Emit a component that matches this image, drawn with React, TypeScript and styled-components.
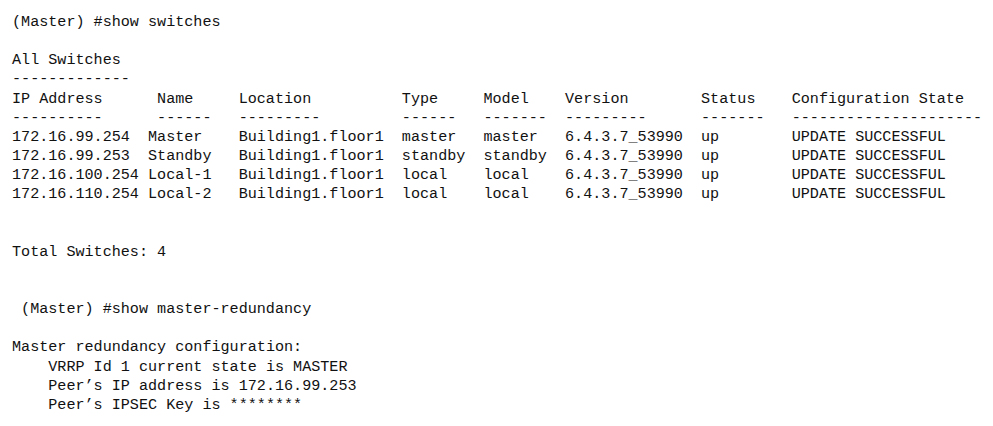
import React from "react";
import styled, { createGlobalStyle } from "styled-components";

const Global = createGlobalStyle`
  html, body { margin: 0; padding: 0; background: #ffffff; }
`;

const LH = 19.15;

const Console = styled.div`
  display: flex;
  flex-direction: column;
  padding: 13px 0 0 12px;
  font-family: "Liberation Mono", "Courier New", monospace;
  font-size: 15.12px;
  line-height: ${LH}px;
  color: #111111;
`;

const Line = styled.div<{ $indent?: number; $gapBefore?: number }>`
  white-space: pre;
  height: ${LH}px;
  padding-left: ${(p) => (p.$indent ?? 0)}ch;
  margin-top: ${(p) => (p.$gapBefore ?? 0) * LH}px;
`;

const Row = styled.div`
  display: flex;
  white-space: pre;
  height: ${LH}px;
`;

const Cell = styled.span<{ $w?: number }>`
  display: inline-block;
  flex: none;
  width: ${(p) => (p.$w ? `${p.$w}ch` : "auto")};
`;

const headWidths = [16, 9, 18, 9, 9, 15, 10];
const dataWidths = [15, 10, 18, 9, 9, 15, 10];

const headers = ["IP Address", "Name", "Location", "Type", "Model", "Version", "Status", "Configuration State"];
const dashes = [10, 6, 9, 6, 7, 9, 7, 21].map((n) => "-".repeat(n));

const rows = [
  ["172.16.99.254", "Master", "Building1.floor1", "master", "master", "6.4.3.7_53990", "up", "UPDATE SUCCESSFUL"],
  ["172.16.99.253", "Standby", "Building1.floor1", "standby", "standby", "6.4.3.7_53990", "up", "UPDATE SUCCESSFUL"],
  ["172.16.100.254", "Local-1", "Building1.floor1", "local", "local", "6.4.3.7_53990", "up", "UPDATE SUCCESSFUL"],
  ["172.16.110.254", "Local-2", "Building1.floor1", "local", "local", "6.4.3.7_53990", "up", "UPDATE SUCCESSFUL"],
];

function TableRow({ cells, widths }: { cells: string[]; widths: number[] }) {
  return (
    <Row>
      {cells.map((c, i) => (
        <Cell key={i} $w={widths[i]}>
          {c}
        </Cell>
      ))}
    </Row>
  );
}

export default function App() {
  return (
    <>
      <Global />
      <Console>
        <Line>(Master) #show switches</Line>
        <Line $gapBefore={1}>All Switches</Line>
        <Line>-------------</Line>
        <TableRow cells={headers} widths={headWidths} />
        <TableRow cells={dashes} widths={headWidths} />
        {rows.map((r, i) => (
          <TableRow key={i} cells={r} widths={dataWidths} />
        ))}
        <Line $gapBefore={2}>Total Switches: 4</Line>
        <Line $gapBefore={2} $indent={1}>(Master) #show master-redundancy</Line>
        <Line $gapBefore={1}>Master redundancy configuration:</Line>
        <Line $indent={4}>VRRP Id 1 current state is MASTER</Line>
        <Line $indent={4}>Peer’s IP address is 172.16.99.253</Line>
        <Line $indent={4}>Peer’s IPSEC Key is ********</Line>
      </Console>
    </>
  );
}
